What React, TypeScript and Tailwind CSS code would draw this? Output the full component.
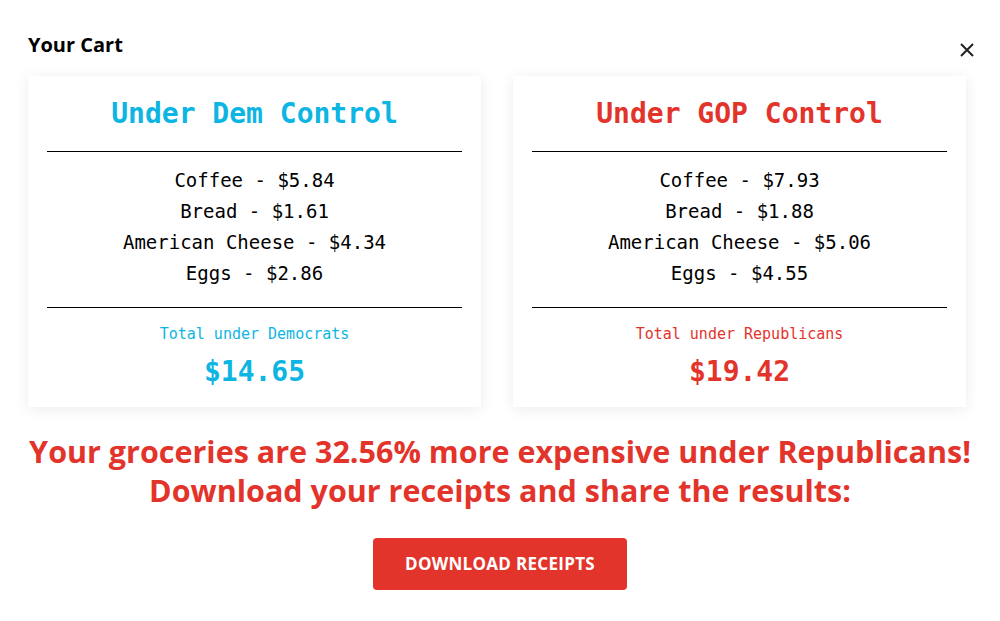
const dem = [
  { name: 'Coffee', price: '$5.84' },
  { name: 'Bread', price: '$1.61' },
  { name: 'American Cheese', price: '$4.34' },
  { name: 'Eggs', price: '$2.86' },
]

const gop = [
  { name: 'Coffee', price: '$7.93' },
  { name: 'Bread', price: '$1.88' },
  { name: 'American Cheese', price: '$5.06' },
  { name: 'Eggs', price: '$4.55' },
]

type Item = { name: string; price: string }

function Receipt({ title, items, label, total, color }: { title: string; items: Item[]; label: string; total: string; color: string }) {
  return (
    <div className="w-[453px] bg-white px-[19px] pt-[21px] pb-[18px] shadow-[0_2px_14px_rgba(0,0,0,0.08)] font-['DejaVu_Sans_Mono','Liberation_Mono',monospace] text-center">
      <h2 className={`text-[28px] leading-[34px] font-bold ${color}`}>{title}</h2>
      <div className="mt-[20px] border-t border-black" />
      <ul className="pt-[13px] pb-[18px] text-[19px] leading-[31px] text-black">
        {items.map((it) => (
          <li key={it.name}>
            {it.name} - {it.price}
          </li>
        ))}
      </ul>
      <div className="border-t border-black" />
      <p className={`mt-[16px] text-[15px] leading-[20px] ${color}`}>{label}</p>
      <p className={`mt-[11px] text-[28px] leading-[34px] font-bold ${color}`}>{total}</p>
    </div>
  )
}

export default function App() {
  return (
    <div className="w-[1000px] h-[621px] bg-white font-['Open_Sans','Liberation_Sans',sans-serif] relative">
      <div className="pl-[28px] pr-[34px] pt-[31px]">
        <h1 className="text-[20px] leading-[28px] font-bold text-black">Your Cart</h1>
        <button className="absolute right-[26px] top-[43px] text-[#222]" aria-label="Close">
          <svg width="14" height="14" viewBox="0 0 14 14" fill="none" stroke="currentColor" strokeWidth="2">
            <path d="M1 1L13 13M13 1L1 13" />
          </svg>
        </button>
        <div className="mt-[17px] flex justify-between">
          <Receipt title="Under Dem Control" items={dem} label="Total under Democrats" total="$14.65" color="text-[#0db5e2]" />
          <Receipt title="Under GOP Control" items={gop} label="Total under Republicans" total="$19.42" color="text-[#e3342b]" />
        </div>
      </div>
      <div className="mt-[25px] text-center text-[#e3342b] font-bold text-[30.5px] leading-[39px]">
        <p>Your groceries are 32.56% more expensive under Republicans!</p>
        <p>Download your receipts and share the results:</p>
      </div>
      <div className="mt-[28px] flex justify-center">
        <button className="w-[254px] h-[52px] rounded-[4px] bg-[#e3342b] text-white font-bold text-[17px] tracking-[0.3px]">
          DOWNLOAD RECEIPTS
        </button>
      </div>
    </div>
  )
}
